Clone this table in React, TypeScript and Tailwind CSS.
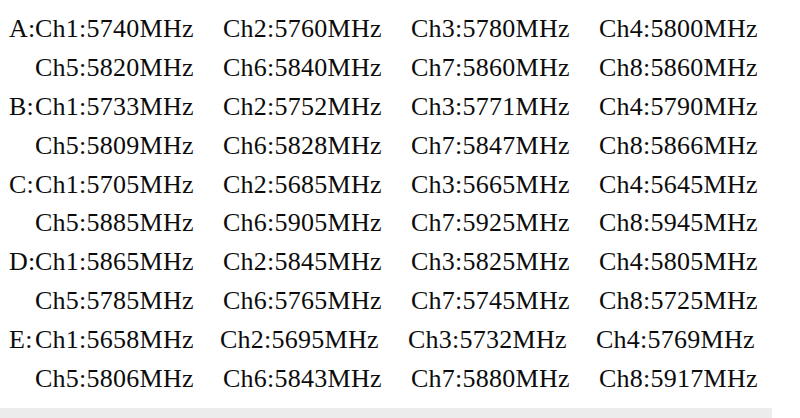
const groups = [
  { name: "A", freqs: [5740, 5760, 5780, 5800, 5820, 5840, 5860, 5860] },
  { name: "B", freqs: [5733, 5752, 5771, 5790, 5809, 5828, 5847, 5866] },
  { name: "C", freqs: [5705, 5685, 5665, 5645, 5885, 5905, 5925, 5945] },
  { name: "D", freqs: [5865, 5845, 5825, 5805, 5785, 5765, 5745, 5725] },
  { name: "E", freqs: [5658, 5695, 5732, 5769, 5806, 5843, 5880, 5917] },
];

function Row({
  prefix,
  start,
  freqs,
  tight,
}: {
  prefix: string;
  start: number;
  freqs: number[];
  tight?: boolean;
}) {
  return (
    <div className="flex h-[38.8px] items-center">
      <div className="w-[26px] shrink-0">{prefix}</div>
      {freqs.map((f, i) => (
        <div
          key={i}
          className={`shrink-0 whitespace-nowrap ${i === 0 && tight ? "w-[185px]" : "w-[188px]"}`}
        >
          Ch{start + i}:{f}MHz
        </div>
      ))}
    </div>
  );
}

export default function App() {
  return (
    <div
      className="w-[800px] h-[418px] bg-white text-[#0c0c0c] flex flex-col overflow-hidden"
      style={{ fontFamily: '"Liberation Serif", "Times New Roman", serif' }}
    >
      <div className="flex-1 pl-[9px] pt-[10px] text-[26px] tracking-[0.25px] leading-none">
        {groups.map((g) => (
          <div key={g.name}>
            <Row
              prefix={g.name + ":"}
              start={1}
              freqs={g.freqs.slice(0, 4)}
              tight={g.name === "E"}
            />
            <Row prefix="" start={5} freqs={g.freqs.slice(4)} />
          </div>
        ))}
      </div>
      <div className="h-[10px] w-[772px] bg-[#ececec]" />
    </div>
  );
}
